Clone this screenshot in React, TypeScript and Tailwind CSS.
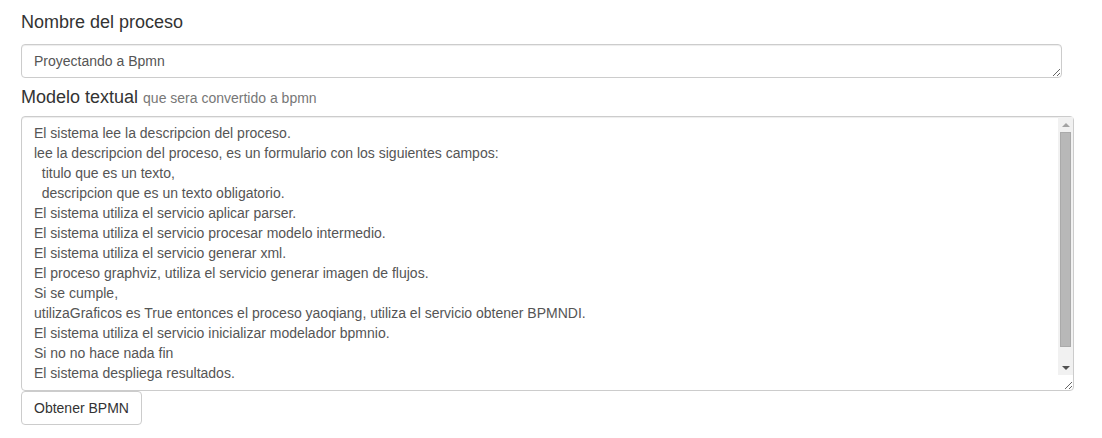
import React from 'react';

const modelo = [
  'El sistema lee la descripcion del proceso.',
  'lee la descripcion del proceso, es un formulario con los siguientes campos:',
  '  titulo que es un texto,',
  '  descripcion que es un texto obligatorio.',
  'El sistema utiliza el servicio aplicar parser.',
  'El sistema utiliza el servicio procesar modelo intermedio.',
  'El sistema utiliza el servicio generar xml.',
  'El proceso graphviz, utiliza el servicio generar imagen de flujos.',
  'Si se cumple,',
  'utilizaGraficos es True entonces el proceso yaoqiang, utiliza el servicio obtener BPMNDI.',
  'El sistema utiliza el servicio inicializar modelador bpmnio.',
  'Si no no hace nada fin',
  'El sistema despliega resultados.',
  '',
].join('\n');

function Arrow({ up, color }: { up?: boolean; color: string }) {
  return (
    <svg width="8" height="4" viewBox="0 0 8 4" className="block">
      <polygon points={up ? '0,4 8,4 4,0' : '0,0 8,0 4,4'} fill={color} />
    </svg>
  );
}

export default function App() {
  return (
    <div className="min-h-screen bg-white px-[21px] pt-[12px] font-['Liberation_Sans',Arial,sans-serif] text-[14px] text-[#333]">
      <h4 className="text-[18px] leading-[20px] font-normal text-[#333]">Nombre del proceso</h4>
      <textarea
        className="mt-[12px] block h-[34px] w-[1041px] rounded-[4px] border border-[#ccc] px-[12px] py-[6px] text-[14px] leading-[20px] text-[#555] shadow-[inset_0_1px_1px_rgba(0,0,0,0.075)] outline-none"
        defaultValue="Proyectando a Bpmn"
        rows={1}
      />
      <h4 className="mt-[9px] text-[18px] leading-[20px] font-normal text-[#333]">
        Modelo textual <small className="text-[14px] text-[#777]">que sera convertido a bpmn</small>
      </h4>
      <div className="relative mt-[8px] h-[275px] w-[1053px]">
        <textarea
          className="block h-full w-full overflow-hidden rounded-[4px] border border-[#ccc] py-[6px] pr-[27px] pl-[12px] text-[14px] leading-[20px] text-[#555] shadow-[inset_0_1px_1px_rgba(0,0,0,0.075)] outline-none"
          defaultValue={modelo}
        />
        {/* scrollbar */}
        <div className="absolute top-[1px] right-[1px] bottom-[16px] flex w-[15px] flex-col bg-[#f1f1f1]">
          <div className="flex h-[15px] items-center justify-center">
            <Arrow up color="#a3a3a3" />
          </div>
          <div className="flex-1 px-[2px]">
            <div className="h-[215px] border border-[#aaa] bg-[#b8b8b8]" />
          </div>
          <div className="flex h-[14px] items-center justify-center">
            <Arrow color="#505050" />
          </div>
        </div>
      </div>
      <button className="block h-[34px] rounded-[4px] border border-[#ccc] bg-white px-[12px] py-[6px] text-[14px] leading-[20px] text-[#333]">
        Obtener BPMN
      </button>
    </div>
  );
}
